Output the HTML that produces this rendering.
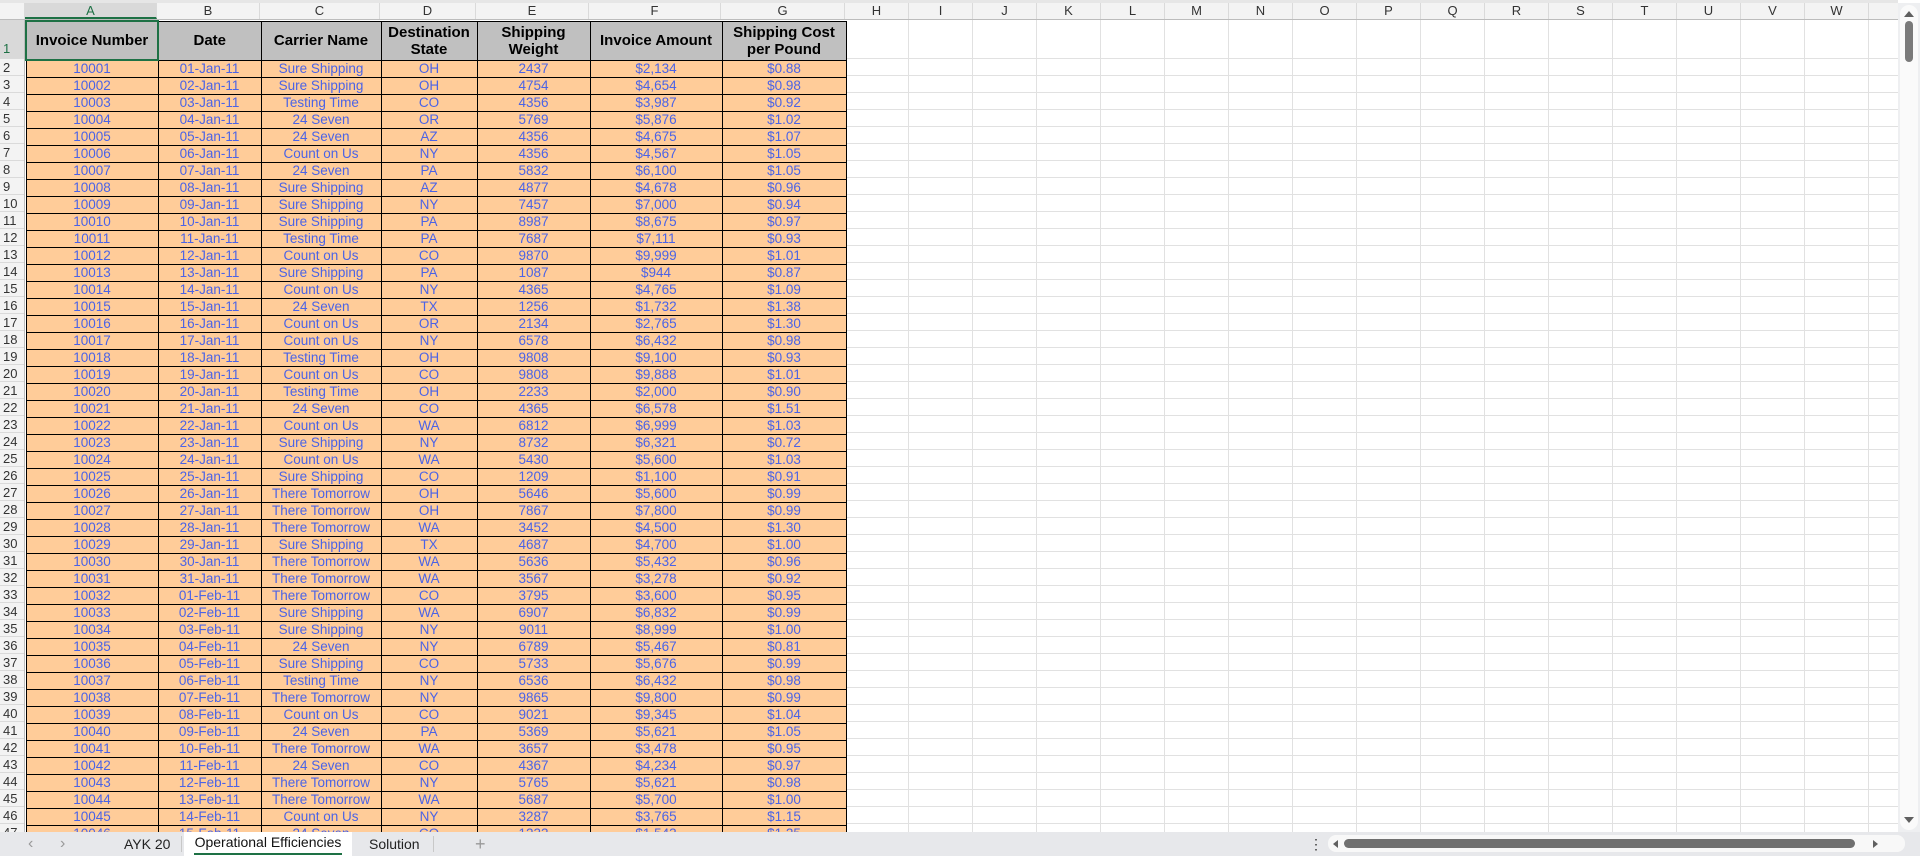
<!DOCTYPE html>
<html><head><meta charset="utf-8"><style>
*{margin:0;padding:0;box-sizing:border-box}
body{width:1920px;height:856px;overflow:hidden;background:#fff;font-family:"Liberation Sans",Arial,sans-serif;position:relative}
#top{position:absolute;left:0;top:0;width:1920px;height:3px;background:#e6e6e6}
#colh{position:absolute;left:0;top:3px;width:1898px;height:17px;background:#f3f3f3;border-bottom:1px solid #bcbcbc}
#colh div{position:absolute;top:0;height:16px;line-height:16px;text-align:center;font-size:13px;color:#333;border-right:1px solid #dadada}
#rowh{position:absolute;left:0;top:20px;width:25px;height:812px;background:#f3f3f3;border-right:1px solid #bcbcbc}
#rowh div{position:absolute;left:0;width:24px;font-size:13px;color:#333;padding-left:3px;border-bottom:1px solid #dadada;line-height:18px!important}
#rowh div.r1{line-height:58px!important}
#grid1{position:absolute;left:845px;top:20px;width:1053px;height:39px;background:repeating-linear-gradient(to right,transparent 0 63px,#e1e1e1 63px 64px);border-bottom:1px solid #e1e1e1}
#grid2{position:absolute;left:845px;top:59px;width:1053px;height:773px;background:repeating-linear-gradient(to right,transparent 0 63px,#e1e1e1 63px 64px),repeating-linear-gradient(to bottom,transparent 0 16px,#e1e1e1 16px 17px)}
table{position:absolute;left:25px;top:20px;border-collapse:collapse;table-layout:fixed;width:820px}
td{border:1px solid #000;padding:0;text-align:center;white-space:nowrap;overflow:hidden}
tr.h td{background:#c0c0c0;height:39px;font-weight:bold;font-size:15px;line-height:17px;color:#000}
tr.d td{background:#ffcc99;height:17px;font-size:13.5px;line-height:15px;color:#4b63e6}
#clip{position:absolute;left:0;top:0;width:1898px;height:832px;overflow:hidden}
#tabs{position:absolute;left:0;top:832px;width:1920px;height:24px;background:#e7e8eb}
.tab{position:absolute;top:0;height:24px;line-height:24px;font-size:14px;color:#222}
#vs{position:absolute;left:1898px;top:3px;width:22px;height:829px;background:#eeeff1}
</style></head><body>
<div id="clip">
<div id="top"></div>
<div id="grid1"></div><div id="grid2"></div>
<div id="colh">
<div style="left:0;width:25px;background:#f3f3f3"></div>
<div style="left:25px;width:132px;color:#1e7145;background:#d9d9d9;border-bottom:2px solid #1e7145">A</div>
<div style="left:157px;width:103px">B</div>
<div style="left:260px;width:120px">C</div>
<div style="left:380px;width:96px">D</div>
<div style="left:476px;width:113px">E</div>
<div style="left:589px;width:132px">F</div>
<div style="left:721px;width:124px">G</div>
<div style="left:845px;width:64px">H</div><div style="left:909px;width:64px">I</div><div style="left:973px;width:64px">J</div><div style="left:1037px;width:64px">K</div><div style="left:1101px;width:64px">L</div><div style="left:1165px;width:64px">M</div><div style="left:1229px;width:64px">N</div><div style="left:1293px;width:64px">O</div><div style="left:1357px;width:64px">P</div><div style="left:1421px;width:64px">Q</div><div style="left:1485px;width:64px">R</div><div style="left:1549px;width:64px">S</div><div style="left:1613px;width:64px">T</div><div style="left:1677px;width:64px">U</div><div style="left:1741px;width:64px">V</div><div style="left:1805px;width:64px">W</div>
</div>
<div id="rowh">
<div class="r1" style="top:0;height:39px;color:#1e7145;background:#d9d9d9">1</div>
<div style="top:39px;height:17px">2</div><div style="top:56px;height:17px">3</div><div style="top:73px;height:17px">4</div><div style="top:90px;height:17px">5</div><div style="top:107px;height:17px">6</div><div style="top:124px;height:17px">7</div><div style="top:141px;height:17px">8</div><div style="top:158px;height:17px">9</div><div style="top:175px;height:17px">10</div><div style="top:192px;height:17px">11</div><div style="top:209px;height:17px">12</div><div style="top:226px;height:17px">13</div><div style="top:243px;height:17px">14</div><div style="top:260px;height:17px">15</div><div style="top:277px;height:17px">16</div><div style="top:294px;height:17px">17</div><div style="top:311px;height:17px">18</div><div style="top:328px;height:17px">19</div><div style="top:345px;height:17px">20</div><div style="top:362px;height:17px">21</div><div style="top:379px;height:17px">22</div><div style="top:396px;height:17px">23</div><div style="top:413px;height:17px">24</div><div style="top:430px;height:17px">25</div><div style="top:447px;height:17px">26</div><div style="top:464px;height:17px">27</div><div style="top:481px;height:17px">28</div><div style="top:498px;height:17px">29</div><div style="top:515px;height:17px">30</div><div style="top:532px;height:17px">31</div><div style="top:549px;height:17px">32</div><div style="top:566px;height:17px">33</div><div style="top:583px;height:17px">34</div><div style="top:600px;height:17px">35</div><div style="top:617px;height:17px">36</div><div style="top:634px;height:17px">37</div><div style="top:651px;height:17px">38</div><div style="top:668px;height:17px">39</div><div style="top:685px;height:17px">40</div><div style="top:702px;height:17px">41</div><div style="top:719px;height:17px">42</div><div style="top:736px;height:17px">43</div><div style="top:753px;height:17px">44</div><div style="top:770px;height:17px">45</div><div style="top:787px;height:17px">46</div><div style="top:804px;height:17px">47</div>
</div>
<table>
<colgroup><col style="width:132px"><col style="width:103px"><col style="width:120px"><col style="width:96px"><col style="width:113px"><col style="width:132px"><col style="width:124px"></colgroup>
<tr class="h"><td style="border:2px solid #1e7145">Invoice Number</td><td>Date</td><td>Carrier Name</td><td>Destination<br>State</td><td>Shipping<br>Weight</td><td>Invoice Amount</td><td>Shipping Cost<br>per Pound</td></tr>
<tr class="d"><td>10001</td><td>01-Jan-11</td><td>Sure Shipping</td><td>OH</td><td>2437</td><td>$2,134</td><td>$0.88</td></tr>
<tr class="d"><td>10002</td><td>02-Jan-11</td><td>Sure Shipping</td><td>OH</td><td>4754</td><td>$4,654</td><td>$0.98</td></tr>
<tr class="d"><td>10003</td><td>03-Jan-11</td><td>Testing Time</td><td>CO</td><td>4356</td><td>$3,987</td><td>$0.92</td></tr>
<tr class="d"><td>10004</td><td>04-Jan-11</td><td>24 Seven</td><td>OR</td><td>5769</td><td>$5,876</td><td>$1.02</td></tr>
<tr class="d"><td>10005</td><td>05-Jan-11</td><td>24 Seven</td><td>AZ</td><td>4356</td><td>$4,675</td><td>$1.07</td></tr>
<tr class="d"><td>10006</td><td>06-Jan-11</td><td>Count on Us</td><td>NY</td><td>4356</td><td>$4,567</td><td>$1.05</td></tr>
<tr class="d"><td>10007</td><td>07-Jan-11</td><td>24 Seven</td><td>PA</td><td>5832</td><td>$6,100</td><td>$1.05</td></tr>
<tr class="d"><td>10008</td><td>08-Jan-11</td><td>Sure Shipping</td><td>AZ</td><td>4877</td><td>$4,678</td><td>$0.96</td></tr>
<tr class="d"><td>10009</td><td>09-Jan-11</td><td>Sure Shipping</td><td>NY</td><td>7457</td><td>$7,000</td><td>$0.94</td></tr>
<tr class="d"><td>10010</td><td>10-Jan-11</td><td>Sure Shipping</td><td>PA</td><td>8987</td><td>$8,675</td><td>$0.97</td></tr>
<tr class="d"><td>10011</td><td>11-Jan-11</td><td>Testing Time</td><td>PA</td><td>7687</td><td>$7,111</td><td>$0.93</td></tr>
<tr class="d"><td>10012</td><td>12-Jan-11</td><td>Count on Us</td><td>CO</td><td>9870</td><td>$9,999</td><td>$1.01</td></tr>
<tr class="d"><td>10013</td><td>13-Jan-11</td><td>Sure Shipping</td><td>PA</td><td>1087</td><td>$944</td><td>$0.87</td></tr>
<tr class="d"><td>10014</td><td>14-Jan-11</td><td>Count on Us</td><td>NY</td><td>4365</td><td>$4,765</td><td>$1.09</td></tr>
<tr class="d"><td>10015</td><td>15-Jan-11</td><td>24 Seven</td><td>TX</td><td>1256</td><td>$1,732</td><td>$1.38</td></tr>
<tr class="d"><td>10016</td><td>16-Jan-11</td><td>Count on Us</td><td>OR</td><td>2134</td><td>$2,765</td><td>$1.30</td></tr>
<tr class="d"><td>10017</td><td>17-Jan-11</td><td>Count on Us</td><td>NY</td><td>6578</td><td>$6,432</td><td>$0.98</td></tr>
<tr class="d"><td>10018</td><td>18-Jan-11</td><td>Testing Time</td><td>OH</td><td>9808</td><td>$9,100</td><td>$0.93</td></tr>
<tr class="d"><td>10019</td><td>19-Jan-11</td><td>Count on Us</td><td>CO</td><td>9808</td><td>$9,888</td><td>$1.01</td></tr>
<tr class="d"><td>10020</td><td>20-Jan-11</td><td>Testing Time</td><td>OH</td><td>2233</td><td>$2,000</td><td>$0.90</td></tr>
<tr class="d"><td>10021</td><td>21-Jan-11</td><td>24 Seven</td><td>CO</td><td>4365</td><td>$6,578</td><td>$1.51</td></tr>
<tr class="d"><td>10022</td><td>22-Jan-11</td><td>Count on Us</td><td>WA</td><td>6812</td><td>$6,999</td><td>$1.03</td></tr>
<tr class="d"><td>10023</td><td>23-Jan-11</td><td>Sure Shipping</td><td>NY</td><td>8732</td><td>$6,321</td><td>$0.72</td></tr>
<tr class="d"><td>10024</td><td>24-Jan-11</td><td>Count on Us</td><td>WA</td><td>5430</td><td>$5,600</td><td>$1.03</td></tr>
<tr class="d"><td>10025</td><td>25-Jan-11</td><td>Sure Shipping</td><td>CO</td><td>1209</td><td>$1,100</td><td>$0.91</td></tr>
<tr class="d"><td>10026</td><td>26-Jan-11</td><td>There Tomorrow</td><td>OH</td><td>5646</td><td>$5,600</td><td>$0.99</td></tr>
<tr class="d"><td>10027</td><td>27-Jan-11</td><td>There Tomorrow</td><td>OH</td><td>7867</td><td>$7,800</td><td>$0.99</td></tr>
<tr class="d"><td>10028</td><td>28-Jan-11</td><td>There Tomorrow</td><td>WA</td><td>3452</td><td>$4,500</td><td>$1.30</td></tr>
<tr class="d"><td>10029</td><td>29-Jan-11</td><td>Sure Shipping</td><td>TX</td><td>4687</td><td>$4,700</td><td>$1.00</td></tr>
<tr class="d"><td>10030</td><td>30-Jan-11</td><td>There Tomorrow</td><td>WA</td><td>5636</td><td>$5,432</td><td>$0.96</td></tr>
<tr class="d"><td>10031</td><td>31-Jan-11</td><td>There Tomorrow</td><td>WA</td><td>3567</td><td>$3,278</td><td>$0.92</td></tr>
<tr class="d"><td>10032</td><td>01-Feb-11</td><td>There Tomorrow</td><td>CO</td><td>3795</td><td>$3,600</td><td>$0.95</td></tr>
<tr class="d"><td>10033</td><td>02-Feb-11</td><td>Sure Shipping</td><td>WA</td><td>6907</td><td>$6,832</td><td>$0.99</td></tr>
<tr class="d"><td>10034</td><td>03-Feb-11</td><td>Sure Shipping</td><td>NY</td><td>9011</td><td>$8,999</td><td>$1.00</td></tr>
<tr class="d"><td>10035</td><td>04-Feb-11</td><td>24 Seven</td><td>NY</td><td>6789</td><td>$5,467</td><td>$0.81</td></tr>
<tr class="d"><td>10036</td><td>05-Feb-11</td><td>Sure Shipping</td><td>CO</td><td>5733</td><td>$5,676</td><td>$0.99</td></tr>
<tr class="d"><td>10037</td><td>06-Feb-11</td><td>Testing Time</td><td>NY</td><td>6536</td><td>$6,432</td><td>$0.98</td></tr>
<tr class="d"><td>10038</td><td>07-Feb-11</td><td>There Tomorrow</td><td>NY</td><td>9865</td><td>$9,800</td><td>$0.99</td></tr>
<tr class="d"><td>10039</td><td>08-Feb-11</td><td>Count on Us</td><td>CO</td><td>9021</td><td>$9,345</td><td>$1.04</td></tr>
<tr class="d"><td>10040</td><td>09-Feb-11</td><td>24 Seven</td><td>PA</td><td>5369</td><td>$5,621</td><td>$1.05</td></tr>
<tr class="d"><td>10041</td><td>10-Feb-11</td><td>There Tomorrow</td><td>WA</td><td>3657</td><td>$3,478</td><td>$0.95</td></tr>
<tr class="d"><td>10042</td><td>11-Feb-11</td><td>24 Seven</td><td>CO</td><td>4367</td><td>$4,234</td><td>$0.97</td></tr>
<tr class="d"><td>10043</td><td>12-Feb-11</td><td>There Tomorrow</td><td>NY</td><td>5765</td><td>$5,621</td><td>$0.98</td></tr>
<tr class="d"><td>10044</td><td>13-Feb-11</td><td>There Tomorrow</td><td>WA</td><td>5687</td><td>$5,700</td><td>$1.00</td></tr>
<tr class="d"><td>10045</td><td>14-Feb-11</td><td>Count on Us</td><td>NY</td><td>3287</td><td>$3,765</td><td>$1.15</td></tr>
<tr class="d"><td>10046</td><td>15-Feb-11</td><td>24 Seven</td><td>CO</td><td>1233</td><td>$1,543</td><td>$1.25</td></tr>
</table>
</div>
<div id="vs">
<div style="position:absolute;left:2px;top:2px;width:18px;height:825px;background:#fafafa;border-radius:9px"></div>
<div style="position:absolute;left:6px;top:8px;width:0;height:0;border-left:5px solid transparent;border-right:5px solid transparent;border-bottom:6px solid #606060"></div>
<div style="position:absolute;left:7px;top:18px;width:8px;height:41px;background:#7a7a7a;border-radius:4px"></div>
<div style="position:absolute;left:6px;top:814px;width:0;height:0;border-left:5px solid transparent;border-right:5px solid transparent;border-top:6px solid #606060"></div>
</div>
<div id="tabs">
<div class="tab" style="left:28px;color:#999;font-size:16px">&#8249;</div>
<div class="tab" style="left:60px;color:#999;font-size:16px">&#8250;</div>
<div class="tab" style="left:124px">AYK 20</div>
<div style="position:absolute;left:181px;top:4px;width:1px;height:16px;background:#c8c8c8"></div>
<div class="tab" style="left:184px;width:168px;background:#fff;text-align:center;line-height:20px;font-weight:500;color:#111">Operational Efficiencies<div style="position:absolute;left:10px;right:10px;bottom:1px;height:2px;background:#1e7145"></div></div>
<div class="tab" style="left:369px">Solution</div>
<div style="position:absolute;left:433px;top:4px;width:1px;height:16px;background:#c8c8c8"></div>
<div class="tab" style="left:475px;color:#999;font-size:18px">+</div>
<div class="tab" style="left:1309px;font-size:14px;color:#333">&#8942;</div>
<div style="position:absolute;left:1328px;top:3px;width:577px;height:17px;background:#f8f8f8;border-radius:8px"></div>
<div style="position:absolute;left:1333px;top:8px;width:0;height:0;border-top:4px solid transparent;border-bottom:4px solid transparent;border-right:5px solid #606060"></div>
<div style="position:absolute;left:1344px;top:7px;width:511px;height:9px;background:#707070;border-radius:5px"></div>
<div style="position:absolute;left:1873px;top:8px;width:0;height:0;border-top:4px solid transparent;border-bottom:4px solid transparent;border-left:5px solid #606060"></div>
</div>
</body></html>
